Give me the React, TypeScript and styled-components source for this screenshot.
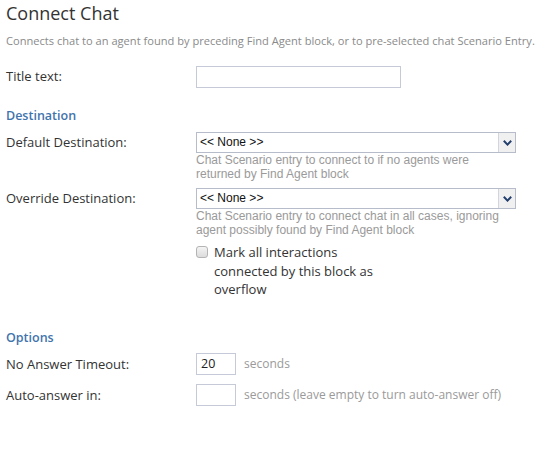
import React, { FC } from 'react';
import styled, { createGlobalStyle } from 'styled-components';

const GlobalStyle = createGlobalStyle`
  html, body {
    margin: 0;
    padding: 0;
    background: #ffffff;
  }
  body {
    font-family: 'Open Sans', 'Liberation Sans', sans-serif;
    color: #333333;
  }
`;

const Side = styled.div`
  width: 543px;
  padding: 0 6px;
  box-sizing: border-box;
`;

const Overskrift = styled.h1`
  margin: 0;
  font-size: 18px;
  font-weight: 400;
  line-height: 26px;
  color: #333333;
`;

const Beskrivelse = styled.p`
  margin: 7px 0 0;
  font-size: 11.1px;
  line-height: 16px;
  color: #8a8a8a;
  white-space: nowrap;
`;

const Seksjon = styled.h2<{ $topp: number }>`
  margin: ${(p) => p.$topp}px 0 0;
  font-size: 12.5px;
  font-weight: 600;
  line-height: 16px;
  color: #3f74ad;
`;

const Rad = styled.div<{ $topp: number }>`
  display: grid;
  grid-template-columns: 190px 1fr;
  align-items: start;
  margin-top: ${(p) => p.$topp}px;
`;

const Etikett = styled.label<{ $hoyde?: number }>`
  font-size: 13px;
  line-height: ${(p) => p.$hoyde ?? 21}px;
  color: #333333;
`;

const Felt = styled.div`
  display: flex;
  flex-direction: column;
`;

const Tekstfelt = styled.input<{ $bredde: number }>`
  box-sizing: border-box;
  width: ${(p) => p.$bredde}px;
  height: 22px;
  margin: 0;
  padding: 0 4px;
  border: 1px solid #c6cad8;
  font-family: 'Open Sans', 'Liberation Sans', sans-serif;
  font-size: 12.5px;
  color: #222222;
  outline: none;
`;

const Nedtrekk = styled.div`
  box-sizing: border-box;
  display: flex;
  width: 320px;
  height: 21px;
  border: 1px solid #b7bccb;
  background: #ffffff;
`;

const ValgtVerdi = styled.span`
  flex: 1;
  padding-left: 3px;
  font-family: 'Liberation Sans', Arial, sans-serif;
  font-size: 12px;
  line-height: 19px;
  color: #111111;
`;

const Pilknapp = styled.span`
  display: flex;
  align-items: center;
  justify-content: center;
  width: 16px;
  border-left: 1px solid #d2d5de;
  background: #f0f0f0;
`;

const Hjelpetekst = styled.div`
  font-family: 'Liberation Sans', Arial, sans-serif;
  font-size: 12px;
  line-height: 14px;
  color: #9a9a9a;
`;

const Avkrysning = styled.label`
  display: flex;
  align-items: flex-start;
  gap: 6px;
  width: 185px;
  font-size: 13px;
  line-height: 18.5px;
  color: #333333;
`;

const Boks = styled.span`
  flex: none;
  box-sizing: border-box;
  width: 12px;
  height: 12px;
  margin-top: 3px;
  border: 1px solid #b4b4b4;
  border-radius: 3px;
  background: linear-gradient(#f4f4f4, #dcdcdc);
`;

const Enhet = styled.div`
  display: flex;
  align-items: center;
  gap: 8px;
`;

const Enhetstekst = styled.span`
  font-size: 12px;
  line-height: 16px;
  color: #9a9a9a;
`;

const Pil: FC = () => (
  <svg width="9" height="6" viewBox="0 0 9 6">
    <path d="M0.8 0.8 L4.5 4.6 L8.2 0.8" fill="none" stroke="#233f6e" strokeWidth="2" />
  </svg>
);

const Valg: FC<{ hjelp: string[] }> = ({ hjelp }) => (
  <Felt>
    <Nedtrekk>
      <ValgtVerdi>{'<< None >>'}</ValgtVerdi>
      <Pilknapp>
        <Pil />
      </Pilknapp>
    </Nedtrekk>
    <Hjelpetekst>
      {hjelp.map((linje) => (
        <div key={linje}>{linje}</div>
      ))}
    </Hjelpetekst>
  </Felt>
);

const App: FC = () => {
  return (
    <>
      <GlobalStyle />
      <Side>
        <Overskrift>Connect Chat</Overskrift>
        <Beskrivelse>
          Connects chat to an agent found by preceding Find Agent block, or to pre-selected chat
          Scenario Entry.
        </Beskrivelse>

        <Rad $topp={17}>
          <Etikett>Title text:</Etikett>
          <Tekstfelt $bredde={205} />
        </Rad>

        <Seksjon $topp={20}>Destination</Seksjon>

        <Rad $topp={8}>
          <Etikett>Default Destination:</Etikett>
          <Valg
            hjelp={['Chat Scenario entry to connect to if no agents were', 'returned by Find Agent block']}
          />
        </Rad>

        <Rad $topp={7}>
          <Etikett>Override Destination:</Etikett>
          <Valg
            hjelp={[
              'Chat Scenario entry to connect chat in all cases, ignoring',
              'agent possibly found by Find Agent block',
            ]}
          />
        </Rad>

        <Rad $topp={6}>
          <span />
          <Avkrysning>
            <Boks />
            <span>Mark all interactions connected by this block as overflow</span>
          </Avkrysning>
        </Rad>

        <Seksjon $topp={31}>Options</Seksjon>

        <Rad $topp={7}>
          <Etikett $hoyde={22}>No Answer Timeout:</Etikett>
          <Enhet>
            <Tekstfelt $bredde={40} defaultValue="20" />
            <Enhetstekst>seconds</Enhetstekst>
          </Enhet>
        </Rad>

        <Rad $topp={9}>
          <Etikett $hoyde={22}>Auto-answer in:</Etikett>
          <Enhet>
            <Tekstfelt $bredde={40} />
            <Enhetstekst>seconds (leave empty to turn auto-answer off)</Enhetstekst>
          </Enhet>
        </Rad>
      </Side>
    </>
  );
};

export default App;
